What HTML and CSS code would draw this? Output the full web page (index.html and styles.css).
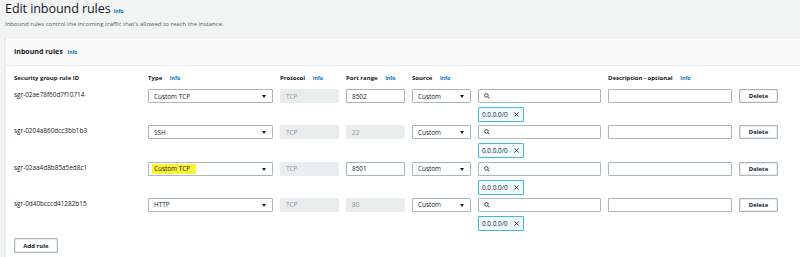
FILE: index.html
```html
<!DOCTYPE html>
<html lang="en">
	<head>
		<meta charset="UTF-8" />
		<title>Edit inbound rules</title>
		<link rel="stylesheet" href="styles.css">
	</head>
	<body>
		<header class="page_head">
			<h1>Edit inbound rules <a class="info" href="#">Info</a></h1>
			<p class="desc">Inbound rules control the incoming traffic that's allowed to reach the instance.</p>
		</header>

		<section class="panel">
			<div class="panel_head">
				<h2>Inbound rules <a class="info" href="#">Info</a></h2>
			</div>
			<div class="panel_body">
				<div class="rule rule_head">
					<span>Security group rule ID</span>
					<span>Type <a class="info" href="#">Info</a></span>
					<span>Protocol <a class="info" href="#">Info</a></span>
					<span>Port range <a class="info" href="#">Info</a></span>
					<span>Source <a class="info" href="#">Info</a></span>
					<span></span>
					<span>Description - optional <a class="info" href="#">Info</a></span>
					<span></span>
				</div>

				<div class="rule">
					<span class="rule_id">sgr-02ae78f60d7f10714</span>
					<div class="select">Custom TCP</div>
					<div class="field disabled">TCP</div>
					<div class="field">8502</div>
					<div class="select">Custom</div>
					<div class="source">
						<div class="field search"><svg viewBox="0 0 10 10"><circle cx="4" cy="4" r="3" /><line x1="6.2" y1="6.2" x2="9" y2="9" /></svg></div>
						<div class="token">0.0.0.0/0 <svg viewBox="0 0 10 10"><path d="M2 2 L8 8 M8 2 L2 8" /></svg></div>
					</div>
					<div class="field"></div>
					<button class="btn">Delete</button>
				</div>

				<div class="rule">
					<span class="rule_id">sgr-0204a860dcc3bb1b3</span>
					<div class="select">SSH</div>
					<div class="field disabled">TCP</div>
					<div class="field disabled">22</div>
					<div class="select">Custom</div>
					<div class="source">
						<div class="field search"><svg viewBox="0 0 10 10"><circle cx="4" cy="4" r="3" /><line x1="6.2" y1="6.2" x2="9" y2="9" /></svg></div>
						<div class="token">0.0.0.0/0 <svg viewBox="0 0 10 10"><path d="M2 2 L8 8 M8 2 L2 8" /></svg></div>
					</div>
					<div class="field"></div>
					<button class="btn">Delete</button>
				</div>

				<div class="rule">
					<span class="rule_id">sgr-02aa4d8b85a5ed8c1</span>
					<div class="select"><span class="marker">Custom TCP</span></div>
					<div class="field disabled">TCP</div>
					<div class="field">8501</div>
					<div class="select">Custom</div>
					<div class="source">
						<div class="field search"><svg viewBox="0 0 10 10"><circle cx="4" cy="4" r="3" /><line x1="6.2" y1="6.2" x2="9" y2="9" /></svg></div>
						<div class="token">0.0.0.0/0 <svg viewBox="0 0 10 10"><path d="M2 2 L8 8 M8 2 L2 8" /></svg></div>
					</div>
					<div class="field"></div>
					<button class="btn">Delete</button>
				</div>

				<div class="rule">
					<span class="rule_id">sgr-0d40bcccd41282b15</span>
					<div class="select">HTTP</div>
					<div class="field disabled">TCP</div>
					<div class="field disabled">80</div>
					<div class="select">Custom</div>
					<div class="source">
						<div class="field search"><svg viewBox="0 0 10 10"><circle cx="4" cy="4" r="3" /><line x1="6.2" y1="6.2" x2="9" y2="9" /></svg></div>
						<div class="token">0.0.0.0/0 <svg viewBox="0 0 10 10"><path d="M2 2 L8 8 M8 2 L2 8" /></svg></div>
					</div>
					<div class="field"></div>
					<button class="btn">Delete</button>
				</div>

				<button class="btn add">Add rule</button>
			</div>
		</section>
	</body>
</html>
```

FILE: styles.css
```css
* {
	padding: 0;
	margin: 0;
	box-sizing: border-box;
}
a {
	text-decoration: none;
}

body {
	width: 800px;
	height: 257px;
	overflow: hidden;
	background-color: #f2f3f3;
	color: #16191f;
	font-family: "Open Sans", "Liberation Sans", sans-serif;
	font-size: 6.4px;
}

.info {
	color: #0073bb;
	font-weight: bold;
	font-size: 5.2px;
	margin-left: 2px;
}

.page_head {
	padding: 0 5px;
	height: 37px;
}

.page_head h1 {
	font-weight: normal;
	font-size: 12.6px;
	line-height: 18px;
	letter-spacing: -0.1px;
}

.page_head h1 .info {
	font-size: 5px;
	margin-left: 0;
}

.desc {
	font-size: 6px;
	line-height: 8px;
	color: #545b64;
}

.panel {
	margin-left: 5px;
	width: 800px;
	border: 1px solid #eaeded;
	border-right: 0;
	background-color: #fff;
	box-shadow: 0 1px 1px rgba(0, 28, 36, 0.2);
}

.panel_head {
	height: 28px;
	padding: 0 8px;
	display: flex;
	align-items: center;
	background-color: #fafafa;
	border-bottom: 1px solid #eaeded;
}

.panel_head h2 {
	font-size: 7px;
	font-weight: bold;
}

.panel_head .info {
	font-size: 5px;
	margin-left: 3px;
}

.panel_body {
	padding: 0 8px;
	height: 200px;
}

.rule {
	display: grid;
	grid-template-columns: 127px 125px 59px 59px 59px 123px 124px 39px;
	column-gap: 7px;
	align-items: start;
	height: 36.3px;
}

.rule_head {
	height: 23px;
	align-items: center;
	font-weight: bold;
	font-size: 6px;
}

.rule_head .info {
	margin-left: 6px;
}

.rule_id {
	line-height: 12px;
	color: #16191f;
}

.select,
.field {
	height: 14px;
	border: 1px solid #aab7b8;
	border-radius: 1px;
	padding: 0 5px;
	display: flex;
	align-items: center;
	background-color: #fff;
}

.select {
	position: relative;
}

.select::after {
	content: "";
	position: absolute;
	right: 6px;
	top: 5px;
	border-left: 2.5px solid transparent;
	border-right: 2.5px solid transparent;
	border-top: 3.5px solid #16191f;
}

.field.disabled {
	background-color: #eaeded;
	border-color: #eaeded;
	color: #879596;
}

.marker {
	background-color: #f9f43a;
	margin-left: -2px;
	padding: 0 6px 1px 2px;
}

.search svg {
	width: 6px;
	height: 6px;
	fill: none;
	stroke: #16191f;
	stroke-width: 1.3;
}

.token {
	display: inline-flex;
	align-items: center;
	gap: 5px;
	margin-top: 4px;
	height: 15px;
	padding: 0 3px;
	border: 1px solid #44b9d6;
	background-color: #f1faff;
	border-radius: 1px;
}

.token svg {
	width: 7px;
	height: 7px;
	fill: none;
	stroke: #16191f;
	stroke-width: 1.2;
}

.btn {
	height: 14px;
	border: 1px solid #aab7b8;
	border-radius: 1px;
	background-color: #fff;
	font-family: inherit;
	font-weight: bold;
	font-size: 6px;
	color: #16191f;
	box-shadow: inset 0 0 0 0.5px #d5dbdb;
}

.add {
	margin-top: 4px;
	width: 44px;
	height: 15px;
}
```
